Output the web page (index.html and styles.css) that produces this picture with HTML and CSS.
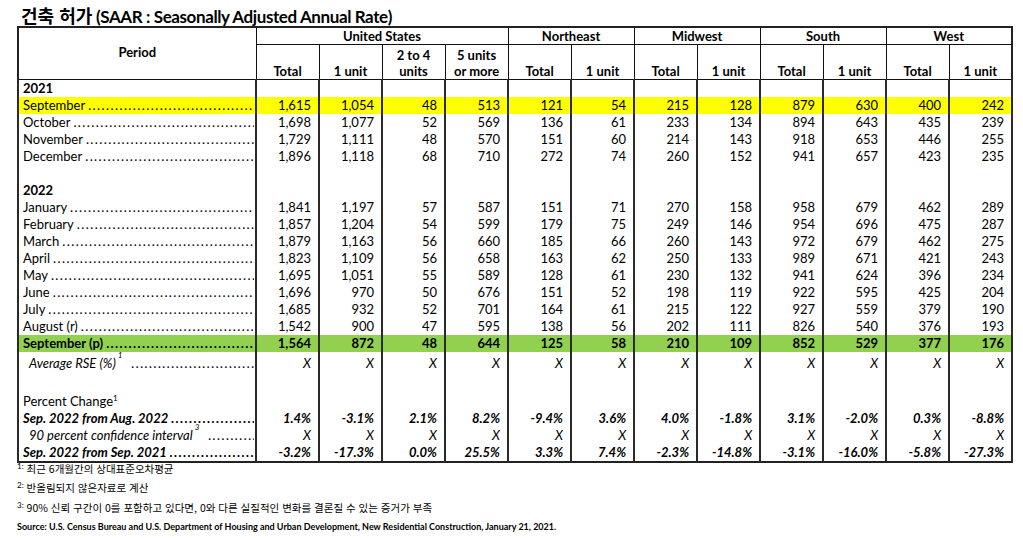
FILE: index.html
```html
<!DOCTYPE html>
<html lang="ko">
<head>
<meta charset="utf-8">
<title>건축 허가</title>
<link rel="stylesheet" href="styles.css">
</head>
<body>
<div class="page">
  <h1 class="title"><span class="ko">건축 허가</span> (SAAR : Seasonally Adjusted Annual Rate)</h1>
  <table class="permits">
    <colgroup><col class="c-period"><col span="12" class="c-num"></colgroup>
    <thead>
      <tr class="h1">
        <th rowspan="2" class="period-h">Period</th>
        <th colspan="4">United States</th>
        <th colspan="2">Northeast</th>
        <th colspan="2">Midwest</th>
        <th colspan="2">South</th>
        <th colspan="2">West</th>
      </tr>
      <tr class="h2">
        <th>Total</th><th>1 unit</th><th>2 to 4<br>units</th><th>5 units<br>or more</th>
        <th>Total</th><th>1 unit</th><th>Total</th><th>1 unit</th>
        <th>Total</th><th>1 unit</th><th>Total</th><th>1 unit</th>
      </tr>
    </thead>
    <tbody>
      <tr class="r first"><td class="period"><b>2021</b></td><td></td><td></td><td></td><td></td><td></td><td></td><td></td><td></td><td></td><td></td><td></td><td></td></tr>
      <tr class="r yellow"><td class="period"><div class="lead">September</div></td><td>1,615</td><td>1,054</td><td>48</td><td>513</td><td>121</td><td>54</td><td>215</td><td>128</td><td>879</td><td>630</td><td>400</td><td>242</td></tr>
      <tr class="r"><td class="period"><div class="lead">October</div></td><td>1,698</td><td>1,077</td><td>52</td><td>569</td><td>136</td><td>61</td><td>233</td><td>134</td><td>894</td><td>643</td><td>435</td><td>239</td></tr>
      <tr class="r"><td class="period"><div class="lead">November</div></td><td>1,729</td><td>1,111</td><td>48</td><td>570</td><td>151</td><td>60</td><td>214</td><td>143</td><td>918</td><td>653</td><td>446</td><td>255</td></tr>
      <tr class="r"><td class="period"><div class="lead">December</div></td><td>1,896</td><td>1,118</td><td>68</td><td>710</td><td>272</td><td>74</td><td>260</td><td>152</td><td>941</td><td>657</td><td>423</td><td>235</td></tr>
      <tr class="r"><td class="period"></td><td></td><td></td><td></td><td></td><td></td><td></td><td></td><td></td><td></td><td></td><td></td><td></td></tr>
      <tr class="r"><td class="period"><b>2022</b></td><td></td><td></td><td></td><td></td><td></td><td></td><td></td><td></td><td></td><td></td><td></td><td></td></tr>
      <tr class="r"><td class="period"><div class="lead">January</div></td><td>1,841</td><td>1,197</td><td>57</td><td>587</td><td>151</td><td>71</td><td>270</td><td>158</td><td>958</td><td>679</td><td>462</td><td>289</td></tr>
      <tr class="r"><td class="period"><div class="lead">February</div></td><td>1,857</td><td>1,204</td><td>54</td><td>599</td><td>179</td><td>75</td><td>249</td><td>146</td><td>954</td><td>696</td><td>475</td><td>287</td></tr>
      <tr class="r"><td class="period"><div class="lead">March</div></td><td>1,879</td><td>1,163</td><td>56</td><td>660</td><td>185</td><td>66</td><td>260</td><td>143</td><td>972</td><td>679</td><td>462</td><td>275</td></tr>
      <tr class="r"><td class="period"><div class="lead">April</div></td><td>1,823</td><td>1,109</td><td>56</td><td>658</td><td>163</td><td>62</td><td>250</td><td>133</td><td>989</td><td>671</td><td>421</td><td>243</td></tr>
      <tr class="r"><td class="period"><div class="lead">May</div></td><td>1,695</td><td>1,051</td><td>55</td><td>589</td><td>128</td><td>61</td><td>230</td><td>132</td><td>941</td><td>624</td><td>396</td><td>234</td></tr>
      <tr class="r"><td class="period"><div class="lead">June</div></td><td>1,696</td><td>970</td><td>50</td><td>676</td><td>151</td><td>52</td><td>198</td><td>119</td><td>922</td><td>595</td><td>425</td><td>204</td></tr>
      <tr class="r"><td class="period"><div class="lead">July</div></td><td>1,685</td><td>932</td><td>52</td><td>701</td><td>164</td><td>61</td><td>215</td><td>122</td><td>927</td><td>559</td><td>379</td><td>190</td></tr>
      <tr class="r"><td class="period"><div class="lead">August (r)</div></td><td>1,542</td><td>900</td><td>47</td><td>595</td><td>138</td><td>56</td><td>202</td><td>111</td><td>826</td><td>540</td><td>376</td><td>193</td></tr>
      <tr class="r green"><td class="period"><div class="lead">September (p)</div></td><td>1,564</td><td>872</td><td>48</td><td>644</td><td>125</td><td>58</td><td>210</td><td>109</td><td>852</td><td>529</td><td>377</td><td>176</td></tr>
      <tr class="r rse ital"><td class="period"><div class="lead indent">Average RSE (%)<sup>1</sup>&nbsp;&nbsp;</div></td><td>X</td><td>X</td><td>X</td><td>X</td><td>X</td><td>X</td><td>X</td><td>X</td><td>X</td><td>X</td><td>X</td><td>X</td></tr>
      <tr class="r gap"><td class="period"></td><td></td><td></td><td></td><td></td><td></td><td></td><td></td><td></td><td></td><td></td><td></td><td></td></tr>
      <tr class="r"><td class="period">Percent Change<sup class="up">1</sup></td><td></td><td></td><td></td><td></td><td></td><td></td><td></td><td></td><td></td><td></td><td></td><td></td></tr>
      <tr class="r bi"><td class="period"><div class="lead">Sep. 2022 from Aug. 2022</div></td><td>1.4%</td><td>-3.1%</td><td>2.1%</td><td>8.2%</td><td>-9.4%</td><td>3.6%</td><td>4.0%</td><td>-1.8%</td><td>3.1%</td><td>-2.0%</td><td>0.3%</td><td>-8.8%</td></tr>
      <tr class="r ital"><td class="period"><div class="lead indent">90 percent confidence interval<sup>3</sup>&nbsp;&nbsp;</div></td><td>X</td><td>X</td><td>X</td><td>X</td><td>X</td><td>X</td><td>X</td><td>X</td><td>X</td><td>X</td><td>X</td><td>X</td></tr>
      <tr class="r bi last"><td class="period"><div class="lead">Sep. 2022 from Sep. 2021</div></td><td>-3.2%</td><td>-17.3%</td><td>0.0%</td><td>25.5%</td><td>3.3%</td><td>7.4%</td><td>-2.3%</td><td>-14.8%</td><td>-3.1%</td><td>-16.0%</td><td>-5.8%</td><td>-27.3%</td></tr>
    </tbody>
  </table>
  <div class="notes">
    <p class="fn"><sup>1:</sup> 최근 6개월간의 상대표준오차평균</p>
    <p class="fn"><sup>2:</sup> 반올림되지 않은자료로 계산</p>
    <p class="fn"><sup>3:</sup> 90% 신뢰 구간이 0를 포함하고 있다면, 0와 다른 실질적인 변화를 결론질 수 있는 증거가 부족</p>
    <p class="source">Source: U.S. Census Bureau and U.S. Department of Housing and Urban Development, New Residential Construction, January 21, 2021.</p>
  </div>
</div>
</body>
</html>
```
FILE: styles.css
```css
body {
  margin: 0;
  background: #fff;
  color: #000;
  font-family: Lato, "Noto Sans CJK KR", sans-serif;
}
.page {
  padding: 4px 0 0 17px;
}
.title {
  margin: 0;
  height: 22px;
  line-height: 22px;
  padding-left: 4px;
  font-size: 17px;
  font-weight: 700;
  letter-spacing: -0.4px;
  white-space: nowrap;
}
.title .ko {
  font-family: "Noto Sans CJK KR", sans-serif;
  font-size: 18px;
  letter-spacing: 0;
}
.permits {
  border-collapse: collapse;
  table-layout: fixed;
  width: 994px;
  border: 2px solid #222;
  font-size: 13px;
}
.c-period { width: 238px; }
.c-num { width: 63px; }

.permits th {
  border: 1px solid #111;
  font-weight: 700;
  padding: 0;
  text-align: center;
  line-height: 16px;
}
.h1 th { height: 16px; vertical-align: middle; }
.h2 th { height: 34px; vertical-align: bottom; padding-bottom: 0; }
.permits th.period-h { vertical-align: middle; padding-bottom: 4px; }

.permits td {
  padding: 0 7px 0 0;
  height: 17px;
  line-height: 17px;
  text-align: right;
  vertical-align: bottom;
  border-left: 2px solid #2a2a2a;
  border-right: 2px solid #2a2a2a;
  white-space: nowrap;
}
.permits td.period {
  text-align: left;
  padding: 0 1px 0 4px;
}
.permits .first td { height: 16px; }
.yellow td { background: #ffff00; }
.green td { background: #92d050; font-weight: 700; }
.permits .rse td { height: 20px; }
.permits .gap td { height: 21px; }
.ital td { font-style: italic; }
.bi td { font-weight: 700; font-style: italic; }

.lead {
  display: flex;
  white-space: nowrap;
}
.lead::after {
  content: "..................................................................................................";
  flex: 1 1 0;
  min-width: 0;
  overflow: hidden;
  letter-spacing: 1.4px;
  padding-left: 3px;
}
.lead.indent { padding-left: 6px; }
.permits sup {
  font-size: 8px;
  line-height: 0;
  vertical-align: 5px;
  padding-left: 2px;
}
.permits sup.up { padding-left: 0; }

.notes {
  margin-top: -4px;
}
.fn {
  margin: 0;
  height: 20px;
  line-height: 20px;
  font-family: "Noto Sans CJK KR", sans-serif;
  font-size: 10.5px;
  white-space: nowrap;
}
.fn:nth-child(2) { height: 19px; line-height: 18px; }
.fn sup {
  font-family: Lato, sans-serif;
  font-size: 8px;
  line-height: 0;
  vertical-align: 4px;
}
.source {
  margin: 0;
  height: 18px;
  line-height: 18px;
  font-size: 9px;
  font-weight: 700;
  white-space: nowrap;
}
```
